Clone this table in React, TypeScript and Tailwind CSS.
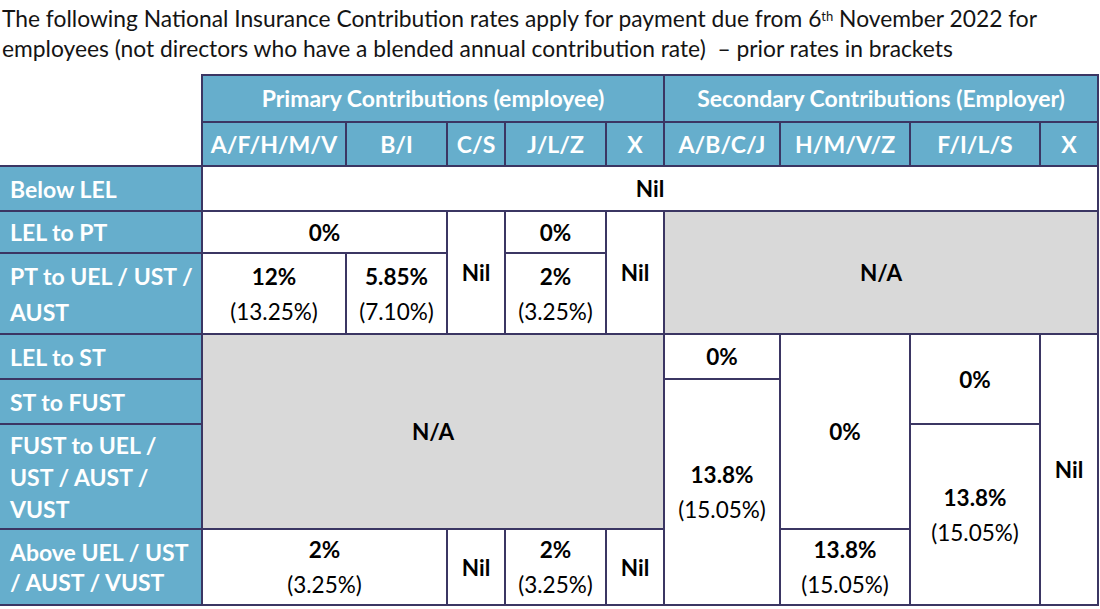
import React from "react"

const edge = "border-2 border-[#3b3663]"
const blue = "bg-[#66aecc] text-white font-bold"

function Label({ children, lead = "leading-[32px]" }: { children: React.ReactNode; lead?: string }) {
  return (
    <td className={`${edge} border-l-0 ${blue} ${lead} text-[23px] text-left pl-2.5 whitespace-nowrap`}>
      {children}
    </td>
  )
}

function Rate({
  rate,
  prior,
  colSpan,
  rowSpan,
}: {
  rate: string
  prior?: string
  colSpan?: number
  rowSpan?: number
}) {
  return (
    <td colSpan={colSpan} rowSpan={rowSpan} className={`${edge} bg-white text-center leading-[35px] text-black`}>
      <div className="font-bold">{rate}</div>
      {prior && <div className="font-normal">{prior}</div>}
    </td>
  )
}

function NotApplicable({ colSpan, rowSpan }: { colSpan: number; rowSpan: number }) {
  return (
    <td colSpan={colSpan} rowSpan={rowSpan} className={`${edge} bg-[#d9d9d9] text-center font-bold text-black`}>
      N/A
    </td>
  )
}

const primary = ["A/F/H/M/V", "B/I", "C/S", "J/L/Z", "X"]
const secondary = ["A/B/C/J", "H/M/V/Z", "F/I/L/S", "X"]

export default function App() {
  return (
    <div className="w-[1100px] h-[609px] bg-white overflow-hidden font-['Lato',sans-serif] text-[22.5px]">
      <p className="pl-0.5 pt-[3px] text-[22.8px] leading-[30px] text-[#141414] whitespace-nowrap">
        The following National Insurance Contribution rates apply for payment due from 6
        <sup className="text-[13px]">th</sup> November 2022 for
        <br />
        employees (not directors who have a blended annual contribution rate)&nbsp; – prior rates in brackets
      </p>

      <table className="mt-[11px] w-[1098px] table-fixed border-collapse">
        <colgroup>
          <col className="w-[202px]" />
          <col className="w-[144px]" />
          <col className="w-[101px]" />
          <col className="w-[58px]" />
          <col className="w-[101px]" />
          <col className="w-[58px]" />
          <col className="w-[116px]" />
          <col className="w-[130px]" />
          <col className="w-[130px]" />
          <col className="w-[58px]" />
        </colgroup>
        <thead className="text-[23px]">
          <tr className="h-[47px]">
            <th rowSpan={2} className="bg-white border-0" />
            <th colSpan={5} className={`${edge} ${blue}`}>
              Primary Contributions (employee)
            </th>
            <th colSpan={4} className={`${edge} ${blue}`}>
              Secondary Contributions (Employer)
            </th>
          </tr>
          <tr className="h-[44px]">
            {primary.map((code, i) => (
              <th key={"p" + i} className={`${edge} ${blue} font-bold`}>
                {code}
              </th>
            ))}
            {secondary.map((code, i) => (
              <th key={"s" + i} className={`${edge} ${blue} font-bold`}>
                {code}
              </th>
            ))}
          </tr>
        </thead>
        <tbody>
          <tr className="h-[45px]">
            <Label>Below LEL</Label>
            <td colSpan={9} className={`${edge} bg-white text-center font-bold text-black`}>
              Nil
            </td>
          </tr>
          <tr className="h-[42px]">
            <Label>LEL to PT</Label>
            <Rate rate="0%" colSpan={2} />
            <Rate rate="Nil" rowSpan={2} />
            <Rate rate="0%" />
            <Rate rate="Nil" rowSpan={2} />
            <NotApplicable colSpan={4} rowSpan={2} />
          </tr>
          <tr className="h-[81px]">
            <Label lead="leading-[36px]">
              PT to UEL / UST /
              <br />
              AUST
            </Label>
            <Rate rate="12%" prior="(13.25%)" />
            <Rate rate="5.85%" prior="(7.10%)" />
            <Rate rate="2%" prior="(3.25%)" />
          </tr>
          <tr className="h-[45px]">
            <Label>LEL to ST</Label>
            <NotApplicable colSpan={5} rowSpan={3} />
            <Rate rate="0%" />
            <Rate rate="0%" rowSpan={3} />
            <Rate rate="0%" rowSpan={2} />
            <Rate rate="Nil" rowSpan={4} />
          </tr>
          <tr className="h-[45px]">
            <Label>ST to FUST</Label>
            <Rate rate="13.8%" prior="(15.05%)" rowSpan={3} />
          </tr>
          <tr className="h-[105px]">
            <Label>
              FUST to UEL /
              <br />
              UST / AUST /
              <br />
              VUST
            </Label>
            <Rate rate="13.8%" prior="(15.05%)" rowSpan={2} />
          </tr>
          <tr className="h-[76px]">
            <Label lead="leading-[30px]">
              Above UEL / UST
              <br />/ AUST / VUST
            </Label>
            <Rate rate="2%" prior="(3.25%)" colSpan={2} />
            <Rate rate="Nil" />
            <Rate rate="2%" prior="(3.25%)" />
            <Rate rate="Nil" />
            <Rate rate="13.8%" prior="(15.05%)" />
          </tr>
        </tbody>
      </table>
    </div>
  )
}
